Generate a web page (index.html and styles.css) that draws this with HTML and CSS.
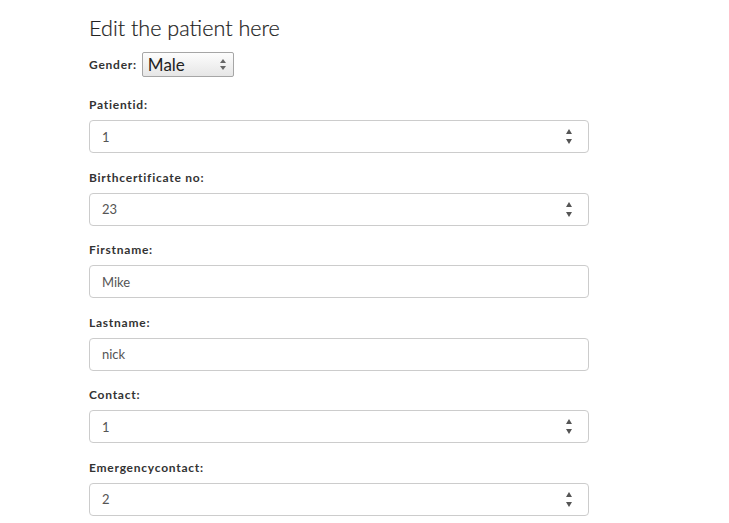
FILE: index.html
```html
<!DOCTYPE html>
<html>
<head>
<meta charset="utf-8">
<link rel="stylesheet" href="styles.css">
</head>
<body>
<div class="page">
  <h1 class="title">Edit the patient here</h1>
  <div class="gender-row">
    <span class="label">Gender:</span>
    <div class="select">
      <span class="select-text">Male</span>
      <span class="arrows small"><span class="up"></span><span class="down"></span></span>
    </div>
  </div>

  <div class="group">
    <div class="label">Patientid:</div>
    <div class="field"><span>1</span><span class="arrows"><span class="up"></span><span class="down"></span></span></div>
  </div>
  <div class="group">
    <div class="label">Birthcertificate no:</div>
    <div class="field"><span>23</span><span class="arrows"><span class="up"></span><span class="down"></span></span></div>
  </div>
  <div class="group">
    <div class="label">Firstname:</div>
    <div class="field"><span>Mike</span></div>
  </div>
  <div class="group">
    <div class="label">Lastname:</div>
    <div class="field"><span>nick</span></div>
  </div>
  <div class="group">
    <div class="label">Contact:</div>
    <div class="field"><span>1</span><span class="arrows"><span class="up"></span><span class="down"></span></span></div>
  </div>
  <div class="group">
    <div class="label">Emergencycontact:</div>
    <div class="field"><span>2</span><span class="arrows"><span class="up"></span><span class="down"></span></span></div>
  </div>
</div>
</body>
</html>
```
FILE: styles.css
```css
html, body {
  margin: 0;
  padding: 0;
  background: #fff;
}
.page {
  padding: 13px 0 0 89px;
  width: 500px;
  font-family: "Lato", "Open Sans", sans-serif;
  color: #333;
}
.title {
  margin: 0 0 9px 0;
  font-size: 21.6px;
  font-weight: 300;
  line-height: 30px;
  color: #222;
  -webkit-text-stroke: 0.2px #222;
}
.gender-row {
  display: flex;
  align-items: center;
  gap: 5px;
  margin-bottom: 20px;
}
.label {
  font-size: 12px;
  font-weight: 700;
  letter-spacing: 0.75px;
  color: #333;
  line-height: 16px;
}
.select {
  width: 92px;
  height: 25px;
  border: 1px solid #a6a6a6;
  border-radius: 2px;
  background: linear-gradient(#fdfdfd, #e6e6e6);
  display: flex;
  align-items: center;
  justify-content: space-between;
  padding: 0 7px 0 5px;
  box-sizing: border-box;
}
.select-text {
  font-size: 17px;
  color: #222;
}
.group + .group {
  margin-top: 16.6px;
}
.group .label {
  margin-bottom: 7px;
}
.field {
  height: 33px;
  box-sizing: border-box;
  border: 1px solid #ccc;
  border-radius: 4px;
  display: flex;
  align-items: center;
  justify-content: space-between;
  padding: 0 16px 0 12px;
  font-size: 13px;
  color: #555;
}
.arrows {
  display: flex;
  flex-direction: column;
  gap: 5px;
  align-items: center;
}
.up, .down {
  width: 0;
  height: 0;
  border-left: 3px solid transparent;
  border-right: 3px solid transparent;
}
.up { border-bottom: 5px solid #555; }
.down { border-top: 5px solid #555; }
.arrows.small { gap: 3px; }
.arrows.small .up { border-bottom-width: 4px; border-bottom-color: #666; }
.arrows.small .down { border-top-width: 4px; border-top-color: #666; }
```
